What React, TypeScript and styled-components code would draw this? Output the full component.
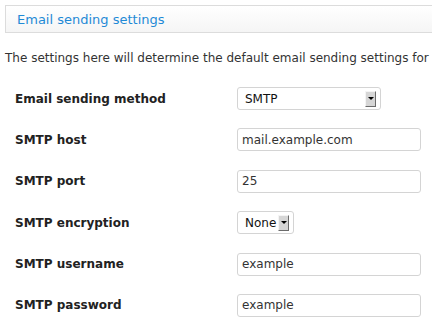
import React from "react";
import styled, { createGlobalStyle } from "styled-components";

const GlobalStyle = createGlobalStyle`
  body {
    margin: 0;
    background: #fff;
    font-family: "DejaVu Sans", Verdana, sans-serif;
  }
`;

const Page = styled.div`
  padding: 5px 0 0 5px;
  width: 432px;
  overflow: hidden;
`;

const Header = styled.div`
  border: 1px solid #dcdcdc;
  border-right: none;
  background: linear-gradient(to bottom, #ffffff, #f5f5f5);
  height: 26px;
  padding-left: 11px;
  display: flex;
  align-items: center;
  color: #1f8ad6;
  font-size: 13px;
`;

const Intro = styled.p`
  margin: 18px 0 0 0;
  font-size: 12px;
  color: #333;
  white-space: nowrap;
`;

const Form = styled.div`
  margin-top: 22px;
  padding-left: 10px;
  display: grid;
  grid-template-columns: 222px 1fr;
  row-gap: 18.4px;
  align-items: center;
`;

const Label = styled.label`
  font-weight: bold;
  font-size: 12px;
  color: #222;
`;

const Input = styled.input`
  box-sizing: border-box;
  width: 184px;
  height: 23px;
  border: 1px solid #d4d4d4;
  border-radius: 3px;
  padding: 0 4px;
  font-family: inherit;
  font-size: 12px;
  color: #333;
  outline: none;
`;

const Select = styled.div<{ $width: number }>`
  box-sizing: border-box;
  width: ${(p) => p.$width}px;
  height: 23px;
  border: 1px solid #d4d4d4;
  border-radius: 3px;
  padding: 0 4px 0 7px;
  display: flex;
  align-items: center;
  justify-content: space-between;
  font-size: 12px;
  color: #111;
`;

const Arrow = styled.span`
  box-sizing: border-box;
  width: 11px;
  height: 16px;
  background: #d6d6d6;
  border-top: 1px solid #f4f4f4;
  border-left: 1px solid #f4f4f4;
  border-right: 1px solid #6b6b6b;
  border-bottom: 1px solid #6b6b6b;
  display: flex;
  align-items: center;
  justify-content: center;

  &::after {
    content: "";
    border-left: 3px solid transparent;
    border-right: 3px solid transparent;
    border-top: 3px solid #000;
  }
`;

const App: React.FC = () => {
  return (
    <Page>
      <GlobalStyle />
      <Header>Email sending settings</Header>
      <Intro>
        The settings here will determine the default email sending settings for
      </Intro>
      <Form>
        <Label>Email sending method</Label>
        <Select $width={144}>
          SMTP
          <Arrow />
        </Select>

        <Label>SMTP host</Label>
        <Input defaultValue="mail.example.com" />

        <Label>SMTP port</Label>
        <Input defaultValue="25" />

        <Label>SMTP encryption</Label>
        <Select $width={57}>
          None
          <Arrow />
        </Select>

        <Label>SMTP username</Label>
        <Input defaultValue="example" />

        <Label>SMTP password</Label>
        <Input defaultValue="example" />
      </Form>
    </Page>
  );
};

export default App;
